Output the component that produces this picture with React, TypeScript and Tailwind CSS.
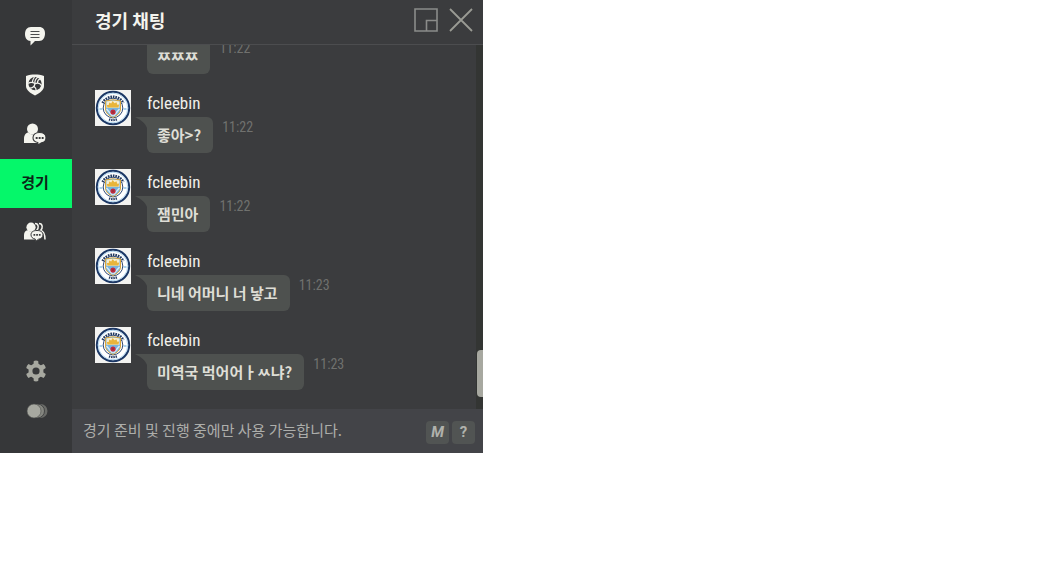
import { useState } from 'react';

type Message = { id: number; author: string; text: string; time: string; grouped?: boolean };

const MESSAGES: Message[] = [
  { id: 1, author: 'fcleebin', text: 'ㅉㅉㅉ', time: '11:22', grouped: true },
  { id: 2, author: 'fcleebin', text: '좋아>?', time: '11:22' },
  { id: 3, author: 'fcleebin', text: '잼민아', time: '11:22' },
  { id: 4, author: 'fcleebin', text: '니네 어머니 너 낳고', time: '11:23' },
  { id: 5, author: 'fcleebin', text: '미역국 먹어어ㅏㅆ냐?', time: '11:23' },
];

const TABS = [
  { id: 'chat', label: '채팅', icon: <ChatIcon /> },
  { id: 'club', label: '클럽', icon: <ClubIcon /> },
  { id: 'friend', label: '친구', icon: <FriendIcon /> },
  { id: 'match', label: '경기', icon: null },
  { id: 'group', label: '그룹', icon: <GroupIcon /> },
];

export default function App() {
  const [tab, setTab] = useState('match');

  return (
    <div className="min-h-screen bg-white font-['Noto_Sans_CJK_KR',sans-serif]">
      <div className="flex w-full max-w-[483px] bg-[#3b3c3e]">
        <nav className="flex w-[72px] shrink-0 flex-col bg-[#363739] pt-3 pb-[22px]">
          {TABS.map((t) => (
            <button key={t.id} type="button" aria-label={t.label} onClick={() => setTab(t.id)}
              className={`flex h-[49px] items-center justify-center pr-[2px] pb-[2px] text-[15px] font-bold
                ${t.id === tab ? 'bg-[#05f76a] text-[#0c2417]' : 'text-[#f4f4ee]'}`}>
              {t.icon ?? t.label}
            </button>
          ))}
          <div className="mt-auto flex flex-col">
            <button type="button" aria-label="설정" className="flex h-10 items-center justify-center">
              <GearIcon />
            </button>
            <button type="button" aria-label="투명도" className="flex h-10 items-center justify-center">
              <OpacityIcon />
            </button>
          </div>
        </nav>

        <section className="flex min-w-0 flex-1 flex-col">
          <header className="flex h-[45px] items-center gap-[11px] border-b border-[#4c4d4f] pr-[10px] pb-[5px] pl-[23px]">
            <h1 className="flex-1 text-lg leading-6 font-bold text-[#f4f4ee]">경기 채팅</h1>
            <button type="button" aria-label="최소화">
              <svg width="24" height="24" viewBox="0 0 24 24" fill="none" stroke="#8b8c8a" strokeWidth="1.6" className="block">
                <path d="M1 1h22v22H1zM12.500 23V12.500H23" />
              </svg>
            </button>
            <button type="button" aria-label="닫기">
              <svg width="24" height="24" viewBox="0 0 24 24" fill="none" stroke="#9a9b94" strokeWidth="1.800" className="block">
                <path d="M1 1l22 22M23 1L1 23" />
              </svg>
            </button>
          </header>

          <div className="flex h-[364px]">
            <ul className="flex min-w-0 flex-1 flex-col justify-end gap-4 overflow-hidden pb-[19px] pl-[23px]">
              {MESSAGES.map((m) => <ChatMessage key={m.id} message={m} />)}
            </ul>
            <div className="flex w-[7px] flex-col items-end justify-end bg-[#333533] pb-3">
              <div className="h-[47px] w-[6px] rounded-l bg-[#a7a8a0]" />
            </div>
          </div>

          <footer className="flex h-11 items-center bg-[#434448] pr-2 pl-[11px]">
            <input type="text" disabled aria-label="메시지" placeholder="경기 준비 및 진행 중에만 사용 가능합니다."
              className="min-w-0 flex-1 pb-[2px] text-[15px] leading-6 placeholder:text-[#adaeab]" />
            <div className="flex gap-[3px] pt-[3px]">
              <FooterButton label="매크로"><i>M</i></FooterButton>
              <FooterButton label="도움말">?</FooterButton>
            </div>
          </footer>
        </section>
      </div>
    </div>
  );
}

function ChatMessage({ message }: { message: Message }) {
  return (
    <li className="flex shrink-0 gap-4">
      {message.grouped ? <div className="w-9" /> : <ClubCrest />}
      <div>
        {!message.grouped && (
          <p className="h-[27px] font-['Roboto_Condensed','Liberation_Sans_Narrow','Liberation_Sans',sans-serif] text-[17px] leading-[26px] text-[#f0f0ea]">
            {message.author}
          </p>
        )}
        <div className="flex gap-[9px]">
          <div className="relative rounded-md bg-[#4e514f] pr-3 pl-[10px] text-[15px] leading-9 font-bold whitespace-nowrap text-[#deded6]">
            {!message.grouped && (
              <svg width="18" height="11" viewBox="0 0 18 11" className="absolute top-0 -left-3">
                <path d="M0 0h18v11h-6C10 6 6 3 0 0z" fill="#4e514f" />
              </svg>
            )}
            <span className="relative">{message.text}</span>
          </div>
          <time className="font-['Roboto_Condensed','Liberation_Sans_Narrow','Liberation_Sans',sans-serif] text-sm leading-5 text-[#70716e]">
            {message.time}
          </time>
        </div>
      </div>
    </li>
  );
}

function FooterButton({ label, children }: { label: string; children: React.ReactNode }) {
  return (
    <button type="button" aria-label={label}
      className="flex h-[23px] w-[23px] items-center justify-center rounded bg-[#515453] font-['Roboto',sans-serif] text-[15px] font-bold text-[#b0b2ac]">
      {children}
    </button>
  );
}

function ClubCrest() {
  return (
    <svg width="36" height="36" viewBox="0 0 36 36" className="shrink-0" role="img" aria-label="Manchester City">
      <rect width="36" height="36" fill="#f3f3f1" />
      <circle cx="18" cy="18" r="16.200" fill="#fff" stroke="#1b3765" strokeWidth="2" />
      <circle cx="18" cy="18" r="14.800" fill="none" stroke="#8fc3e6" strokeWidth="0.700" />
      <path d="M7.500 13a12 12 0 0 1 21 0" fill="none" stroke="#22395f" strokeWidth="2.600" strokeDasharray="1.600 0.900" />
      <path d="M14 29.300a12 12 0 0 0 8 0" fill="none" stroke="#22395f" strokeWidth="2.400" strokeDasharray="1.400 0.800" />
      <path d="M4.500 19h3M28.500 19h3" stroke="#8fc3e6" strokeWidth="1.500" />
      <circle cx="18" cy="18" r="9.800" fill="#fff" stroke="#1b3765" strokeWidth="0.900" />
      <path d="M10.500 11q7.500-2.500 15 0v8c0 4-3.500 6.500-7.500 8.500-4-2-7.500-4.500-7.500-8.500z" fill="#78b4df" stroke="#d9a53a" />
      <path d="M11.500 11.600q6.500-1.800 13 0v6.200h-13z" fill="#f7eed0" />
      <path d="M12.500 17.500l-.8-2.500h2l.5-2.500 2 1 1.500-2.500 1.800 2.300 2-1 .8 2.500 2-.2-.9 2.900z" fill="#e9b53b" />
      <path d="M11.500 19l6 7M24.500 19l-6 7" stroke="#d9ecf8" strokeWidth="1.400" />
      <circle cx="18" cy="22" r="2.600" fill="#c02b3f" />
      <circle cx="18" cy="22" r="0.800" fill="#733" />
    </svg>
  );
}

function ChatIcon() {
  return (
    <svg width="22" height="22" viewBox="0 0 22 22">
      <path d="M7 2h8c4 0 6 2.500 6 6.500S19 16 15 16h-4l-4.500 4.500V16C3 16 1 13 1 9s2-7 6-7z" fill="currentColor" />
      <path d="M6.500 6.500h9M6.500 9.500h9M6.500 12.500h9" stroke="#4a4b4c" strokeWidth="1.200" />
    </svg>
  );
}

function ClubIcon() {
  return (
    <svg width="20" height="22" viewBox="0 0 20 22">
      <path d="M10 .5c3 0 6 .4 9 1.500v10c0 4-4 7-9 9.500-5-2.500-9-5.500-9-9.500V2C4 .9 7 .5 10 .5z" fill="currentColor" />
      <circle cx="10" cy="9.600" r="6.600" fill="#363739" />
      <g fill="none" stroke="currentColor" strokeWidth="1.200">
        <path d="M10 9.600C9.500 6.500 10.500 4.500 13.500 3" />
        <path d="M10 9.600c3-1.200 5.200-.4 6.600 2" />
        <path d="M10 9.600c-.5 3-2.500 4.600-5.500 4.600" />
        <path d="M10 9.600C7.500 8 5 8 3.200 9.500" />
        <path d="M12.500 9c-.2-2 .8-3.500 2.700-4.300M8.800 12.300c1.700 1.300 2.500 2.400 2.400 4.200M7.500 8.400c0-2 .6-3.600 2-5.400" />
      </g>
    </svg>
  );
}

function FriendIcon() {
  return (
    <svg width="24" height="22" viewBox="0 0 24 22">
      <circle cx="9.500" cy="6" r="5.500" fill="currentColor" />
      <path d="M1 20v-4c0-4 2-6.500 4.500-6.500 2 2.500 6 2.500 8 0 3 0 5 3 5 6V20z" fill="currentColor" />
      <path d="M16.500 9.500c4 0 6.500 2 6.500 5.200s-2 4.800-4.500 5L15 22l-.2-2.500c-3-.6-4.800-2.300-4.800-4.800 0-3.200 2.500-5.200 6.500-5.200z"
        fill="currentColor" stroke="#363739" strokeWidth="1.100" />
      <path d="M12.700 14h1.900v1.900h-1.900zM15.700 14h1.900v1.900h-1.900zM18.700 14h1.900v1.900h-1.900z" fill="#363739" />
    </svg>
  );
}

function GroupIcon() {
  return (
    <svg width="24" height="20" viewBox="0 0 24 20">
      <g fill="none" stroke="currentColor" strokeWidth="1.500">
        <path d="M12 1.500c4 0 4 5 1.500 7 2 .5 3 2 3.500 4" />
        <path d="M16 1.500c4 0 4 5 1.500 7 3 .8 4.500 4 4.500 9" />
      </g>
      <circle cx="8" cy="5.200" r="4.600" fill="currentColor" />
      <path d="M1 17.500V13c0-3 1.800-4.800 4-4.800 2 1.800 4.500 1.800 6.500 0 3 .8 4.500 3 4.500 6v3.300z" fill="currentColor" />
      <path d="M14 8.500c4 0 6 1.700 6 4.300s-1.800 4.200-4.500 4.400L12.500 19.500l-.2-2.400C9.500 16.600 8 15 8 12.800c0-2.600 2-4.300 6-4.300z"
        fill="currentColor" stroke="#363739" />
      <path d="M10.500 12h1.700v1.700h-1.700zM13.200 12h1.700v1.700h-1.700zM15.900 12h1.700v1.700h-1.700z" fill="#363739" />
    </svg>
  );
}

function GearIcon() {
  return (
    <svg width="22" height="22" viewBox="0 0 22 22">
      <g fill="#a7a8a0">
        <path fillRule="evenodd" d="M11 3.500a7.500 7.500 0 1 1 0 15 7.500 7.500 0 0 1 0-15zM11 7.400a3.600 3.600 0 1 0 0 7.200 3.600 3.600 0 0 0 0-7.200z" />
        {[0, 60, 120, 180, 240, 300].map((deg) => (
          <path key={deg} d="M8.300 6l.5-5q2.200-.8 4.400 0l.5 5z" transform={`rotate(${deg} 11 11)`} />
        ))}
      </g>
    </svg>
  );
}

function OpacityIcon() {
  return (
    <svg width="22" height="16" viewBox="0 0 22 16" className="ml-[2px]">
      <circle cx="14.500" cy="8" r="7" fill="#6a6b68" />
      <circle cx="11.500" cy="8" r="7" fill="#858680" stroke="#363739" strokeWidth="0.800" />
      <circle cx="8" cy="8" r="7" fill="#a7a8a0" stroke="#4a4b49" strokeWidth="0.600" />
    </svg>
  );
}
